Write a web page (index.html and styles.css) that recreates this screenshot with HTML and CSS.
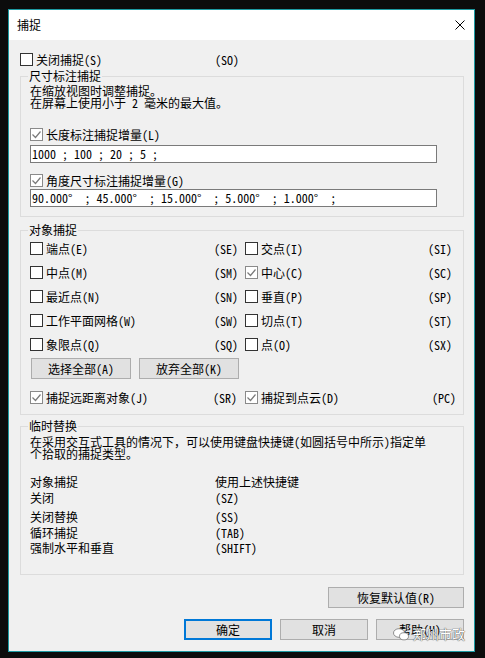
FILE: index.html
```html
<!DOCTYPE html>
<html lang="zh-CN">
<head>
<meta charset="utf-8">
<title>捕捉</title>
<link rel="stylesheet" href="styles.css">
</head>
<body>
<div class="window">
  <div class="titlebar">
    <span class="title">捕捉</span>
    <svg class="close" viewBox="0 0 10 10"><path d="M0.5 0.5 L9.5 9.5 M9.5 0.5 L0.5 9.5" stroke="#000" stroke-width="1" fill="none"/></svg>
  </div>
  <div class="body">
    <div class="toprow">
      <div class="chk top-chk"><span class="cb"></span>关闭捕捉(S)</div>
      <span class="code">(SO)</span>
    </div>

    <fieldset class="group g1">
      <legend>尺寸标注捕捉</legend>
      <p class="note">在缩放视图时调整捕捉。<br>在屏幕上使用小于 2 毫米的最大值。</p>
      <div class="chk first-chk"><span class="cb on"><svg viewBox="0 0 11 11"><path d="M1.5 5.5 L4.5 8.5 L9.5 2.5" stroke="#7a7a7a" stroke-width="1.2" fill="none"/></svg></span>长度标注捕捉增量(L)</div>
      <div class="field">1000 ; 100 ; 20 ; 5 ;</div>
      <div class="chk second-chk"><span class="cb on"><svg viewBox="0 0 11 11"><path d="M1.5 5.5 L4.5 8.5 L9.5 2.5" stroke="#7a7a7a" stroke-width="1.2" fill="none"/></svg></span>角度尺寸标注捕捉增量(G)</div>
      <div class="field field2">90.000°  ; 45.000°  ; 15.000°  ; 5.000°  ; 1.000°  ;</div>
    </fieldset>

    <fieldset class="group g2">
      <legend>对象捕捉</legend>
      <div class="osnap">
        <div class="chk"><span class="cb"></span>端点(E)</div><span class="code">(SE)</span>
        <div class="chk"><span class="cb"></span>交点(I)</div><span class="code">(SI)</span>
        <div class="chk"><span class="cb"></span>中点(M)</div><span class="code">(SM)</span>
        <div class="chk"><span class="cb on"><svg viewBox="0 0 11 11"><path d="M1.5 5.5 L4.5 8.5 L9.5 2.5" stroke="#7a7a7a" stroke-width="1.2" fill="none"/></svg></span>中心(C)</div><span class="code">(SC)</span>
        <div class="chk"><span class="cb"></span>最近点(N)</div><span class="code">(SN)</span>
        <div class="chk"><span class="cb"></span>垂直(P)</div><span class="code">(SP)</span>
        <div class="chk"><span class="cb"></span>工作平面网格(W)</div><span class="code">(SW)</span>
        <div class="chk"><span class="cb"></span>切点(T)</div><span class="code">(ST)</span>
        <div class="chk"><span class="cb"></span>象限点(Q)</div><span class="code">(SQ)</span>
        <div class="chk"><span class="cb"></span>点(O)</div><span class="code">(SX)</span>
      </div>
      <div class="btnrow">
        <div class="btn sel">选择全部(A)</div>
        <div class="btn sel">放弃全部(K)</div>
      </div>
      <div class="osnap remote">
        <div class="chk"><span class="cb on"><svg viewBox="0 0 11 11"><path d="M1.5 5.5 L4.5 8.5 L9.5 2.5" stroke="#7a7a7a" stroke-width="1.2" fill="none"/></svg></span>捕捉远距离对象(J)</div><span class="code code-sr">(SR)</span>
        <div class="chk"><span class="cb on"><svg viewBox="0 0 11 11"><path d="M1.5 5.5 L4.5 8.5 L9.5 2.5" stroke="#7a7a7a" stroke-width="1.2" fill="none"/></svg></span>捕捉到点云(D)</div><span class="code code-pc">(PC)</span>
      </div>
    </fieldset>

    <fieldset class="group g3">
      <legend>临时替换</legend>
      <p class="note">在采用交互式工具的情况下，可以使用键盘快捷键(如圆括号中所示)指定单<br>个拾取的捕捉类型。</p>
      <div class="keys">
        <span>对象捕捉</span><span>使用上述快捷键</span>
        <span>关闭</span><span>(SZ)</span>
        <span>关闭替换</span><span>(SS)</span>
        <span>循环捕捉</span><span>(TAB)</span>
        <span>强制水平和垂直</span><span>(SHIFT)</span>
      </div>
    </fieldset>

    <div class="resetrow">
      <div class="btn reset">恢复默认值(R)</div>
    </div>
    <div class="actions">
      <div class="btn act primary">确定</div>
      <div class="btn act">取消</div>
      <div class="btn act">帮助(H)</div>
    </div>
  </div>
  <div class="watermark">
    <svg class="wm-icon" viewBox="0 0 16 13"><ellipse cx="6" cy="5" rx="5.5" ry="4.3" fill="#fff" stroke="#777" stroke-width="0.8"/><ellipse cx="11" cy="8.3" rx="4.5" ry="3.6" fill="#fff" stroke="#777" stroke-width="0.8"/></svg>
    <span class="wm-text">郑州市政</span>
  </div>
</div>
</body>
</html>
```

FILE: styles.css
```css
* {
  box-sizing: border-box;
}

html, body {
  margin: 0;
  padding: 0;
}

body {
  width: 485px;
  height: 658px;
  overflow: hidden;
  background: #0c0c0c;
  font-family: "Noto Sans Mono CJK SC", "Noto Sans CJK SC", sans-serif;
  font-size: 12px;
  line-height: 12px;
  color: #000;
  padding-top: 9px;
}

.window {
  position: relative;
  margin-left: 8px;
  width: 467px;
  border: 1px solid #1d9aa2;
  background: #f0f0f0;
}

.titlebar {
  height: 30px;
  background: #fff;
  display: flex;
  align-items: center;
  justify-content: space-between;
  padding: 0 9px 0 8px;
}

.close {
  width: 10px;
  height: 10px;
  display: block;
}

.body {
  padding: 13px 10px 11px 11px;
}

.toprow {
  display: flex;
  align-items: center;
  height: 13px;
}

.top-chk {
  width: 195px;
}

.chk {
  display: flex;
  align-items: center;
  gap: 3px;
  height: 13px;
  white-space: nowrap;
}

.cb {
  flex: none;
  width: 13px;
  height: 13px;
  border: 1px solid #333;
  background: #fff;
  display: flex;
  align-items: center;
  justify-content: center;
}

.cb.on {
  border-color: #8a8a8a;
}

.cb svg {
  width: 11px;
  height: 11px;
  display: block;
}

.code {
  white-space: nowrap;
}

.group {
  margin: 0;
  min-width: 0;
  border: 1px solid #dcdcdc;
  padding: 3px 9px 9px 9px;
}

.group legend {
  padding: 0 1px;
  margin-left: -2px;
  line-height: 12px;
}

.g1 {
  margin-top: 4px;
}

.note {
  margin: 0;
  line-height: 12px;
  white-space: nowrap;
}

.first-chk {
  margin-top: 19px;
}

.second-chk {
  margin-top: 11px;
}

.field {
  margin-top: 4px;
  width: 407px;
  height: 18px;
  border: 1px solid #7a7a7a;
  background: #fff;
  padding-left: 1px;
  line-height: 16px;
  white-space: pre;
  overflow: hidden;
}

.field2 {
  margin-top: 2px;
}

.g2 {
  margin-top: 7px;
  padding-top: 6px;
  padding-bottom: 10px;
}

.osnap {
  display: grid;
  grid-template-columns: 184px 31px 183px 1fr;
  row-gap: 11px;
  align-items: center;
}

.btnrow {
  display: flex;
  gap: 8px;
  margin-top: 7px;
  margin-left: 1px;
}

.btn {
  height: 21px;
  background: #e1e1e1;
  border: 1px solid #adadad;
  display: flex;
  align-items: center;
  justify-content: center;
  white-space: nowrap;
}

.btn.sel {
  width: 100px;
}

.remote {
  margin-top: 12px;
}

.code-sr {
  margin-left: -1px;
}

.code-pc {
  margin-left: 4px;
}

.g3 {
  margin-top: 5px;
  padding-top: 4px;
  padding-bottom: 19px;
}

.keys {
  margin-top: 16px;
  display: grid;
  grid-template-columns: 185px 1fr;
  grid-template-rows: 16px 19px 16px 15px 13px;
  white-space: nowrap;
}

.resetrow {
  display: flex;
  justify-content: flex-end;
  margin-top: 12px;
}

.btn.reset {
  width: 136px;
}

.actions {
  display: flex;
  justify-content: flex-end;
  gap: 8px;
  margin-top: 11px;
}

.btn.act {
  width: 88px;
}

.btn.primary {
  border: 2px solid #0078d7;
}

.watermark {
  position: absolute;
  left: 384px;
  top: 617px;
  display: flex;
  align-items: center;
  gap: 4px;
}

.wm-icon {
  width: 16px;
  height: 13px;
  display: block;
}

.wm-text {
  font-family: "Noto Sans CJK SC", sans-serif;
  font-size: 13px;
  line-height: 14px;
  color: #fff;
  text-shadow: 0 0 1px #444, 0 0 1px #444;
}
```
